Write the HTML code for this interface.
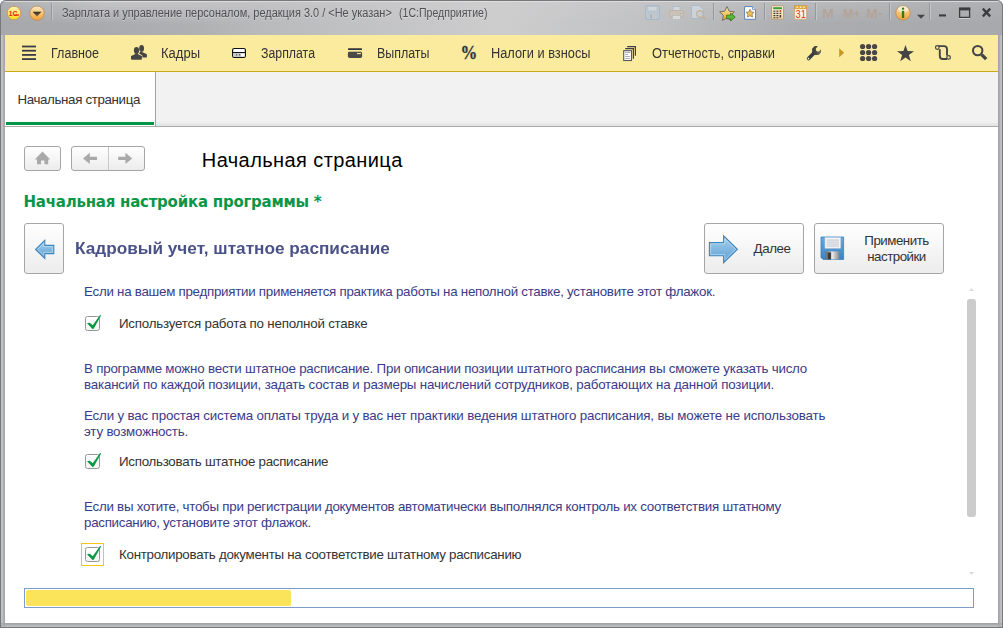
<!DOCTYPE html>
<html lang="ru"><head><meta charset="utf-8">
<title>Зарплата и управление персоналом</title>
<style>
*{box-sizing:border-box;margin:0;padding:0}
html,body{width:1003px;height:628px;overflow:hidden;background:#fff;font-family:"Liberation Sans",sans-serif;}
#win{position:absolute;left:0;top:0;width:1003px;height:628px;border-radius:6px 6px 0 0;background:#a6a7aa;overflow:hidden}
#tbar{left:0;top:0;width:1003px;height:35px;background:linear-gradient(90deg,#a7a8ab 0,#a9aaad 10%,#b0b1b3 20%,#b9babc 26%,#cdcdce 50%,#c0c1c2 65%,#abacaf 80%,#a8a9ac 100%)}
#tbar::before{content:"";position:absolute;left:0;top:0;width:1003px;height:35px;background:linear-gradient(90deg,#adaeb0 0,#b4b5b7 3%,#c3c3c5 10%,#c3c3c5 20%,#c2c2c4 26%,#cececf 50%,#c4c4c6 65%,#b9babc 80%,#b3b4b6 90%,#aeafb1 100%);-webkit-mask-image:linear-gradient(#000 0,#000 3px,transparent 25px);mask-image:linear-gradient(#000 0,#000 3px,transparent 25px)}
#tbar::after{content:"";position:absolute;left:0;top:1px;width:1003px;height:1px;background:rgba(226,226,228,.8)}
#frame{position:absolute;left:0;top:0;width:1003px;height:628px;border-radius:6px 6px 0 0;border:1px solid #77787a;pointer-events:none;z-index:9}
.abs{position:absolute}
#title{left:62px}
.tt{top:6px;font-size:12px;line-height:14px;color:#4f4f53;white-space:pre;text-shadow:0 1px 0 rgba(255,255,255,.3)}
.tsep{position:absolute;top:3px;width:2px;height:17px;background:linear-gradient(90deg,#96979a 50%,#c4c5c7 50%)}
.mem{position:absolute;top:6.5px;font-size:12px;line-height:14px;font-weight:bold;color:#b3a398}
#menubar{left:5px;top:35px;width:993px;height:37px;background:#fbeb9e;border-bottom:1px solid #c9a91b}
.mi{position:absolute;top:10px;font-size:14px;line-height:16px;color:#333;white-space:nowrap}
.ic{position:absolute;overflow:visible}
#tabbar{left:5px;top:72px;width:993px;height:55px;background:linear-gradient(#f2f2f2 0,#f2f2f2 49px,#e2e2e2 54px);border-bottom:1px solid #a9a9a9}
#tab{left:0;top:0;width:151px;height:54px;background:#fff;border-right:1px solid #a2a2a2;font-size:13.33px;line-height:15px;color:#333;padding:20px 0 0 13px;white-space:nowrap}
#content{left:5px;top:126px;width:993px;height:497px}
#cbg{left:5px;top:127px;width:993px;height:496px;background:#fff}
.btn{position:absolute;border:1px solid #a6a6a6;border-radius:3px;background:linear-gradient(#ffffff,#ececec)}
#ptitle{left:197px;top:22px;font-size:20px;line-height:24px;color:#000;white-space:nowrap}
#gh{left:19px;top:66px;font-family:'DejaVu Sans',sans-serif;font-size:15px;line-height:20px;font-weight:bold;color:#0a9647;white-space:nowrap}
#sh{left:70px;top:113px;font-size:16px;line-height:20px;font-weight:bold;color:#4a5187;white-space:nowrap}
.bt{position:absolute;font-size:13.33px;line-height:16px;color:#333;white-space:nowrap;text-align:center}
.p{position:absolute;left:79px;font-size:13.33px;line-height:16px;color:#3b3b88;white-space:nowrap}
.l{position:absolute;left:114px;font-size:13.33px;line-height:16px;color:#333;white-space:nowrap}
.cb{position:absolute;left:80px;width:15px;height:15px;border:1px solid #979797;border-radius:2.5px;background:linear-gradient(#fff,#f4f4f4)}
.cb svg{position:absolute;left:-1px;top:-4px;overflow:visible}
/*CAL*/
#title{margin-left:-0.20px;transform:scaleX(0.9130);transform-origin:0 50%}
#title2{margin-left:-0.20px;transform:scaleX(0.8791);transform-origin:0 50%}
#mi1{margin-left:0.20px;transform:scaleX(0.8962);transform-origin:0 50%}
#mi2{margin-left:0.20px;transform:scaleX(0.9300);transform-origin:0 50%}
#mi3{margin-left:-0.20px;transform:scaleX(0.8808);transform-origin:0 50%}
#mi4{margin-left:-0.50px;transform:scaleX(0.8884);transform-origin:0 50%}
#mi5{margin-left:-0.50px;transform:scaleX(0.9144);transform-origin:0 50%}
#mi6{margin-left:-0.10px;transform:scaleX(0.9190);transform-origin:0 50%}
#tabt{margin-left:-0.60px;letter-spacing:-0.353px}
#ptitle{margin-left:-0.20px;letter-spacing:0.412px}
#gh{margin-left:-0.50px;letter-spacing:-0.240px}
#sh{margin-left:-0.50px;transform:scaleX(1.0747);transform-origin:0 50%}
#bt1{margin-left:0.50px;letter-spacing:-0.400px}
#bt2{margin-left:-0.50px;letter-spacing:-0.500px}
#p1{margin-left:0.00px;letter-spacing:-0.260px}
#l1{margin-left:0.00px;letter-spacing:-0.216px}
#p2{margin-left:0.00px;letter-spacing:-0.202px}
#p3{margin-left:0.00px;letter-spacing:-0.177px}
#p4{margin-left:0.00px;letter-spacing:-0.163px}
#p5{margin-left:0.00px;letter-spacing:-0.187px}
#l2{margin-left:0.00px;letter-spacing:-0.273px}
#p6{margin-left:0.00px;letter-spacing:-0.255px}
#p7{margin-left:0.00px;letter-spacing:-0.276px}
#l3{margin-left:0.00px;letter-spacing:-0.271px}
#mem1{margin-left:-1.60px;transform:scaleX(1.1651);transform-origin:0 50%}
#mem2{margin-left:-1.20px;transform:scaleX(1.0021);transform-origin:0 50%}
#mem3{margin-left:-1.00px;transform:scaleX(1.1538);transform-origin:0 50%}
/*ENDCAL*/
</style></head><body>
<div id="win">
<div class="abs" id="tbar"></div>
<div class="abs tt" id="title">Зарплата и управление персоналом, редакция 3.0 / &lt;Не указан&gt;</div><div class="abs tt" id="title2" style="left:399px">(1С:Предприятие)</div>
<div class="tsep" style="left:51px"></div>
<div class="tsep" style="left:713px"></div>
<div class="tsep" style="left:764px"></div>
<div class="tsep" style="left:815px"></div>
<div class="tsep" style="left:889px"></div>
<div class="tsep" style="left:929px"></div>
<div id="mem1" class="mem" style="left:824px">M</div>
<div id="mem2" class="mem" style="left:844px">M+</div>
<div id="mem3" class="mem" style="left:867px">M-</div>

<!-- title bar icons -->
<svg class="ic" style="left:0;top:0" width="1003" height="35" viewBox="0 0 1003 35">
 <defs>
  <linearGradient id="g1c" x1="0" y1="0" x2="0" y2="1"><stop offset="0" stop-color="#fdf3b0"/><stop offset=".5" stop-color="#fbe870"/><stop offset="1" stop-color="#f7dc10"/></linearGradient>
  <linearGradient id="gor" x1="0" y1="0" x2="0" y2="1"><stop offset="0" stop-color="#fdeccf"/><stop offset=".45" stop-color="#f9c67c"/><stop offset="1" stop-color="#f3a032"/></linearGradient>
  <linearGradient id="gtri" x1="0" y1="0" x2="0" y2="1"><stop offset="0" stop-color="#2b2b2b"/><stop offset="1" stop-color="#8a6a3c"/></linearGradient>
  <linearGradient id="gst" x1="0" y1="0" x2="0" y2="1"><stop offset="0" stop-color="#fde9a8"/><stop offset="1" stop-color="#f0a830"/></linearGradient>
  <linearGradient id="gcalc" x1="0" y1="0" x2="0" y2="1"><stop offset="0" stop-color="#fff4dc"/><stop offset="1" stop-color="#f6d9a4"/></linearGradient>
 </defs>
 <!-- 1C logo -->
 <circle cx="14" cy="13" r="6.8" fill="url(#g1c)" stroke="#c99a62" stroke-width="1"/>
 <text x="8.8" y="15.7" font-family="Liberation Sans, sans-serif" font-weight="bold" font-size="7.7" fill="#e8201a" textLength="8.6" lengthAdjust="spacingAndGlyphs">1С</text>
 <rect x="14.4" y="14.4" width="4.5" height="1.3" fill="#e8201a"/>
 <!-- orange dropdown -->
 <circle cx="37" cy="13.2" r="7.2" fill="url(#gor)" stroke="#b98a5a" stroke-width="0.8"/>
 <path d="M32.6 11.8 H41.4 L37 16.6 Z" fill="url(#gtri)"/>
 <!-- disabled floppy -->
 <g opacity=".5">
  <rect x="645.5" y="5.5" width="14" height="14" rx="1.5" fill="#b4cbe0" stroke="#8fb0cf"/>
  <rect x="648" y="6.5" width="9" height="4.5" fill="#dfe9f1" stroke="#9ab7d0" stroke-width=".6"/>
  <rect x="649" y="13.5" width="7" height="5.5" fill="#c8cdd2"/>
  <rect x="650" y="14.5" width="2" height="4" fill="#8fa8c0"/>
 </g>
 <!-- disabled printer -->
 <g opacity=".5">
  <rect x="673" y="6.5" width="7" height="5" fill="#e4edf5" stroke="#9ab7d0" stroke-width=".8"/>
  <rect x="669.5" y="10.5" width="14" height="6.5" rx="1.5" fill="#d9c3ae" stroke="#bfa58e"/>
  <rect x="672.5" y="15.5" width="8" height="4" fill="#f4f4f4" stroke="#b8b8b8" stroke-width=".8"/>
  <rect x="680" y="13" width="1.5" height="1.2" fill="#6fc06f"/>
 </g>
 <!-- disabled preview -->
 <g opacity=".5">
  <path d="M691.5 5.5 H699.5 L703.5 9.5 V18.5 H691.5 Z" fill="#dbe7f2" stroke="#9ab7d0"/>
  <circle cx="700" cy="14" r="3.3" fill="#cfdff0" stroke="#c9a888" stroke-width="1.4"/>
  <path d="M702.5 16.5 L705.5 19.5" stroke="#c9a888" stroke-width="2"/>
 </g>
 <!-- star with green arrow -->
 <path d="M727 6.6 L729.2 11.2 L734.3 11.9 L730.6 15.4 L731.5 20.4 L727 18 L722.5 20.4 L723.4 15.4 L719.7 11.9 L724.8 11.2 Z" fill="url(#gst)" stroke="#6b6558" stroke-width=".9"/>
 <path d="M726.5 15.2 H730.6 V13 L735.2 17 L730.6 21 V18.8 H726.5 Z" fill="#58b83c" stroke="#2c7a1c" stroke-width=".8"/>
 <!-- doc with star -->
 <path d="M744.6 6.6 H752.5 L755.5 9.6 V19.3 H744.6 Z" fill="#fff" stroke="#5c84b4" stroke-width="1"/>
 <path d="M752.5 6.6 V9.6 H755.5" fill="#dbe6f2" stroke="#5c84b4" stroke-width=".7"/>
 <path d="M750 9.3 L751.2 11.9 L754 12.3 L752 14.2 L752.5 17 L750 15.7 L747.5 17 L748 14.2 L746 12.3 L748.8 11.9 Z" fill="#f4c252" stroke="#7a6a48" stroke-width=".7"/>
 <!-- calculator -->
 <rect x="771.6" y="5.8" width="12" height="13.4" rx="1" fill="url(#gcalc)" stroke="#b59a78" stroke-width="1"/>
 <rect x="773.2" y="7.2" width="8.8" height="2" fill="#3c9c3c"/>
 <g fill="#3a3a3a"><rect x="773.4" y="10.6" width="2" height="1.2"/><rect x="776.4" y="10.6" width="2" height="1.2"/>
 <rect x="773.4" y="12.8" width="2" height="1.2"/><rect x="776.4" y="12.8" width="2" height="1.2"/><rect x="779.6" y="12.8" width="1.6" height="1.2"/>
 <rect x="773.4" y="15" width="2" height="1.2"/><rect x="776.4" y="15" width="2" height="1.2"/><rect x="779.6" y="15" width="1.6" height="2.6"/>
 <rect x="773.4" y="17.2" width="2" height="1"/><rect x="776.4" y="17.2" width="2" height="1"/></g>
 <rect x="779.6" y="10.2" width="1.6" height="1.8" fill="#e03020"/>
 <!-- calendar -->
 <rect x="794.6" y="5.8" width="12" height="13.4" fill="#fff6e6" stroke="#c8ae88" stroke-width="1"/>
 <rect x="794.6" y="5.8" width="12" height="3" fill="#e9b243" stroke="#c59432" stroke-width=".6"/>
 <g fill="#fff"><rect x="796.6" y="6.6" width="1.2" height="1.2"/><rect x="800" y="6.6" width="1.2" height="1.2"/><rect x="803.4" y="6.6" width="1.2" height="1.2"/></g>
 <text x="795.6" y="18.2" font-family="Liberation Sans, sans-serif" font-weight="normal" font-size="11" fill="#e0301c" textLength="10.4" lengthAdjust="spacingAndGlyphs">31</text>
 <!-- info -->
 <circle cx="903" cy="12.9" r="7.2" fill="url(#gor)" stroke="#b98a5a" stroke-width=".8"/>
 <ellipse cx="903" cy="9.2" rx="5" ry="3.2" fill="#fff" opacity=".45"/>
 <rect x="901.9" y="7.6" width="2.3" height="2.2" rx="1" fill="#2f7d12"/>
 <rect x="901.9" y="10.8" width="2.3" height="7.2" fill="#2f7d12"/>
 <path d="M917 14.8 H925 L921 18.8 Z" fill="#454545"/>
 <!-- window controls -->
 <rect x="939" y="15.6" width="7" height="1.2" fill="#d8d8da"/>
 <rect x="939" y="14.4" width="7" height="2.2" fill="#3c3c3e"/>
 <path d="M959.6 8.2 H969.6 V17.4 H959.6 Z" fill="none" stroke="#3c3c3e" stroke-width="1.3"/>
 <rect x="959" y="7.8" width="11.2" height="2.6" fill="#3c3c3e"/>
 <rect x="959" y="18" width="11.2" height="1" fill="#d0d0d2"/>
 <path d="M982.8 8.6 L990.2 16.4 M990.2 8.6 L982.8 16.4" stroke="#3c3c3e" stroke-width="2.3" fill="none"/>
</svg>
<div class="abs" id="menubar">
  <div id="mi1" class="mi" style="left:46px">Главное</div>
  <div id="mi2" class="mi" style="left:156px">Кадры</div>
  <div id="mi3" class="mi" style="left:256px">Зарплата</div>
  <div id="mi4" class="mi" style="left:372px">Выплаты</div>
  <div id="mi5" class="mi" style="left:486px">Налоги и взносы</div>
  <div id="mi6" class="mi" style="left:647px">Отчетность, справки</div>
</div>

<!-- menu bar icons (page coords) -->
<svg class="ic" style="left:0;top:35px" width="1003" height="37" viewBox="0 35 1003 37">
 <g fill="#3a3b45"><rect x="22" y="45.6" width="14" height="1.8"/><rect x="22" y="49.8" width="14" height="1.8"/><rect x="22" y="54" width="14" height="1.8"/><rect x="22" y="58.2" width="14" height="1.8"/></g>
 <!-- people -->
 <g fill="#454545">
  <ellipse cx="141.6" cy="48.4" rx="2.4" ry="3.4"/>
  <path d="M140.4 51.4 L142.6 52.3 L146.9 54.2 V57 Q146.9 57.6 146.2 57.6 H142.4 V55.4 L139 53.4 Z"/>
  <ellipse cx="136.5" cy="50.5" rx="2.6" ry="3.4"/>
  <path d="M135 53.4 H138 L138.4 54.6 L141.9 56 V59 Q141.9 59.8 141 59.8 H132 Q131 59.8 131 59 V56 L134.6 54.6 Z"/>
 </g>
 <!-- card -->
 <rect x="232.6" y="48.5" width="12.8" height="8.8" rx="1.6" fill="#fff" stroke="#111" stroke-width="1.2"/>
 <rect x="233.2" y="52.9" width="11.6" height="3.9" fill="#c9c9c9"/>
 <rect x="232.6" y="52" width="12.8" height="1" fill="#111"/>
 <rect x="241" y="53.6" width="3.4" height="2.8" fill="#fff"/>
 <rect x="236" y="54.2" width="1.2" height="1.2" fill="#444"/><rect x="239" y="54.2" width="1.2" height="1.2" fill="#444"/>
 <!-- wallet -->
 <rect x="348" y="48.2" width="14" height="1.9" rx=".6" fill="#33343d"/>
 <rect x="348.4" y="52.2" width="13.2" height="5.2" rx=".8" fill="#4a4a4a" stroke="#33343d" stroke-width=".9"/>
 <rect x="357" y="53" width="4" height="1.1" fill="#f7e79a"/>
 <!-- percent -->
 <text x="460.6" y="58.9" font-family="Liberation Serif, serif" font-weight="bold" font-size="18" fill="#34353f" stroke="#34353f" stroke-width=".3" textLength="16.8" lengthAdjust="spacingAndGlyphs">%</text>
 <!-- docs -->
 <path d="M627.2 46.6 H635.4 V55.8" fill="none" stroke="#3e3f48" stroke-width="1.2"/>
 <path d="M625.2 48.7 H633.4 V58.8" fill="none" stroke="#3e3f48" stroke-width="1.2"/>
 <rect x="623.7" y="50.7" width="7.8" height="9.8" fill="#fff" stroke="#55565e" stroke-width="1.1"/>
 <g fill="#9a9a9a"><rect x="625.2" y="52.2" width="4.8" height=".8"/><rect x="625.2" y="54.1" width="2.8" height=".8"/><rect x="625.2" y="56.1" width="4.8" height=".8"/><rect x="625.2" y="58.1" width="4.8" height=".8"/></g>
 <!-- wrench -->
 <linearGradient id="gwr" gradientUnits="userSpaceOnUse" x1="812" y1="0" x2="821" y2="0"><stop offset="0" stop-color="#3a3b43"/><stop offset=".45" stop-color="#4a4a47"/><stop offset="1" stop-color="#7a775c"/></linearGradient>
 <path d="M808.6 58.5 L814 53.1" stroke="#3a3b43" stroke-width="3.6" stroke-linecap="round" fill="none"/>
 <path d="M812.1 48.7 L814.6 46.1 H818 L815.9 48.5 V50.3 L817.1 51.4 H818.8 L821 49.2 V52.6 L818.6 55 H814.8 L812.1 53.2 Z" fill="url(#gwr)"/>
 <circle cx="808.5" cy="58.6" r=".85" fill="#fdf4c8"/>
 <path d="M839.2 48.2 L844.2 52.7 L839.2 57.2 Z" fill="#c49a22"/>
 <g fill="#474747">
  <circle cx="862.6" cy="46.5" r="2.6"/><circle cx="868.6" cy="46.5" r="2.6"/><circle cx="874.6" cy="46.5" r="2.6"/>
  <circle cx="862.6" cy="52.5" r="2.6"/><circle cx="868.6" cy="52.5" r="2.6"/><circle cx="874.6" cy="52.5" r="2.6"/>
  <circle cx="862.6" cy="58.5" r="2.6"/><circle cx="868.6" cy="58.5" r="2.6"/><circle cx="874.6" cy="58.5" r="2.6"/>
 </g>
 <!-- star -->
 <path d="M905.5 45 L907.6 51.1 L914 51.2 L908.9 55.1 L910.8 61.2 L905.5 57.5 L900.2 61.2 L902.1 55.1 L897 51.2 L903.4 51.1 Z" fill="#444"/>
 <!-- scroll -->
 <g fill="none" stroke="#444" stroke-width="1.9">
  <path d="M938.4 46.1 H944 Q947 46.1 947 49 V55.6"/>
  <path d="M939.8 49.2 V56 Q939.8 59 942.8 59 H947"/>
 </g>
 <circle cx="937.3" cy="47.5" r="1.8" fill="#fbeb9e" stroke="#444" stroke-width="1.2"/>
 <circle cx="948.6" cy="57.4" r="1.8" fill="#fbeb9e" stroke="#444" stroke-width="1.2"/>
 <!-- search -->
 <circle cx="977.7" cy="50.6" r="4.7" fill="none" stroke="#444" stroke-width="2"/>
 <path d="M981.6 54.6 L986.2 59.2" stroke="#444" stroke-width="3.3" fill="none"/>
</svg>
<div class="abs" id="tabbar"><div class="abs" id="tab"><span id="tabt" style="display:inline-block">Начальная страница</span></div><div class="abs" style="left:1px;top:50px;width:148px;height:3px;background:#009646"></div></div>
<div class="abs" id="cbg"></div>
<div class="abs" id="content">
  <div class="btn" style="left:19px;top:20px;width:37px;height:25px"></div>
  <div class="btn" style="left:66px;top:20px;width:74px;height:25px"><div class="abs" style="left:36px;top:0;width:1px;height:23px;background:#c8c8c8"></div></div>
  
  <!-- content icons (page coords) -->
  <svg class="ic" style="left:-5px;top:-126px;z-index:5;pointer-events:none" width="1003" height="628" viewBox="0 0 1003 628">
   <defs>
    <linearGradient id="gar" x1="0" y1="0" x2="0" y2="1"><stop offset="0" stop-color="#a9d0ec"/><stop offset="1" stop-color="#5a9fd4"/></linearGradient>
    <linearGradient id="gfl" x1="0" y1="0" x2="0" y2="1"><stop offset="0" stop-color="#6aa9dc"/><stop offset="1" stop-color="#3a83c2"/></linearGradient>
    <linearGradient id="gsh" x1="0" y1="0" x2="1" y2="0"><stop offset="0" stop-color="#6a6a6a"/><stop offset=".5" stop-color="#e8e8e8"/><stop offset="1" stop-color="#8a8a8a"/></linearGradient>
   </defs>
   <!-- home -->
   <g fill="#a9a9a9">
    <path d="M42.5 151.6 L50.2 159.4 H34.8 Z"/>
    <path d="M37 158 H48.2 V164.3 H44.4 V160.4 H41 V164.3 H37 Z"/>
   </g>
   <!-- back / forward -->
   <path d="M83 158.4 L89.8 152.8 V156.8 H97 V160 H89.8 V164 Z" fill="#a9a9a9"/>
   <path d="M132.2 158.4 L125.4 152.8 V156.8 H118.2 V160 H125.4 V164 Z" fill="#a9a9a9"/>
   <!-- big back arrow -->
   <path d="M35.6 249.4 L44.8 240.4 V245.4 H53.8 V253.6 H44.8 V258.4 Z" fill="url(#gar)" stroke="#3f86bd" stroke-width="1.1" stroke-linejoin="miter"/>
   <path d="M37.6 249.4 L43.6 243.6 V246.6 H52.6 V252.4 H43.6 V255.2 Z" fill="none" stroke="#cfe6f6" stroke-width=".7" opacity=".8"/>
   <!-- next arrow -->
   <path d="M709.4 242.6 H723.6 V235.8 L737.4 249.3 L723.6 262.8 V255.8 H709.4 Z" fill="url(#gar)" stroke="#3f86bd" stroke-width="1.1"/>
   <path d="M710.6 243.8 H724.8 V238.8 L735.6 249.3 L724.8 259.8 V254.6 H710.6 Z" fill="none" stroke="#cfe6f6" stroke-width=".7" opacity=".8"/>
   <!-- floppy -->
   <path d="M821 237 H843.6 V259.4 H823 L821 257.4 Z" fill="url(#gfl)" stroke="#3a7fba" stroke-width=".8"/>
   <rect x="825" y="237.6" width="15.6" height="10.6" fill="#f4f6f8" stroke="#c5d3e0" stroke-width=".6"/>
   <g fill="#b9bec4"><rect x="826.6" y="239.6" width="12.4" height=".9"/><rect x="826.6" y="241.6" width="12.4" height=".9"/><rect x="826.6" y="243.6" width="12.4" height=".9"/><rect x="826.6" y="245.6" width="12.4" height=".9"/></g>
   <rect x="825.6" y="251.4" width="13.6" height="8" fill="url(#gsh)"/>
   <rect x="827.6" y="252.4" width="3.4" height="7" fill="#3c3c3c"/>
   <!-- scroll arrows -->
   <path d="M969 291 L971.5 288 L974 291 Z" fill="#dcdcdc"/>
   <path d="M969 572 L971.5 575 L974 572 Z" fill="#dcdcdc"/>
  </svg>
  <div class="abs" id="ptitle">Начальная страница</div>
  <div class="abs" id="gh">Начальная настройка программы *</div>
  <div class="btn" style="left:19px;top:97px;width:40px;height:51px"></div>
  <div class="abs" id="sh">Кадровый учет, штатное расписание</div>
  <div class="btn" style="left:699px;top:97px;width:100px;height:51px"><div id="bt1" class="bt" style="left:48px;top:17px">Далее</div></div>
  <div class="btn" style="left:809px;top:97px;width:130px;height:51px"><div id="bt2" class="bt" style="left:36px;top:9px;width:92px">Применить<br>настройки</div></div>

  <div id="p1" class="p" style="top:158px">Если на вашем предприятии применяется практика работы на неполной ставке, установите этот флажок.</div>
  <div class="cb" style="top:190px"><svg width="18" height="18" viewBox="0 -3 18 18"><path d="M2 7.3 L4.4 6.7 Q6.2 7.2 7.7 9.3 L14.7 -0.5 Q15.6 -1.3 16.1 -0.4 L9 12.3 Q8 13.6 7 12.5 Z" fill="#0b9843"/></svg></div>
  <div id="l1" class="l" style="top:189.6px">Используется работа по неполной ставке</div>
  <div id="p2" class="p" style="top:235px">В программе можно вести штатное расписание. При описании позиции штатного расписания вы сможете указать число</div>
  <div id="p3" class="p" style="top:251px">вакансий по каждой позиции, задать состав и размеры начислений сотрудников, работающих на данной позиции.</div>
  <div id="p4" class="p" style="top:282px">Если у вас простая система оплаты труда и у вас нет практики ведения штатного расписания, вы можете не использовать</div>
  <div id="p5" class="p" style="top:298px">эту возможность.</div>
  <div class="cb" style="top:328px"><svg width="18" height="18" viewBox="0 -3 18 18"><path d="M2 7.3 L4.4 6.7 Q6.2 7.2 7.7 9.3 L14.7 -0.5 Q15.6 -1.3 16.1 -0.4 L9 12.3 Q8 13.6 7 12.5 Z" fill="#0b9843"/></svg></div>
  <div id="l2" class="l" style="top:327.6px">Использовать штатное расписание</div>
  <div id="p6" class="p" style="top:373px">Если вы хотите, чтобы при регистрации документов автоматически выполнялся контроль их соответствия штатному</div>
  <div id="p7" class="p" style="top:389px">расписанию, установите этот флажок.</div>
  <div class="abs" style="left:76px;top:417px;width:23px;height:23px;border:1px solid #f5c518"></div>
  <div class="cb" style="top:421px"><svg width="18" height="18" viewBox="0 -3 18 18"><path d="M2 7.3 L4.4 6.7 Q6.2 7.2 7.7 9.3 L14.7 -0.5 Q15.6 -1.3 16.1 -0.4 L9 12.3 Q8 13.6 7 12.5 Z" fill="#0b9843"/></svg></div>
  <div id="l3" class="l" style="top:420.6px">Контролировать документы на соответствие штатному расписанию</div>

  <div class="abs" style="left:962px;top:173px;width:9px;height:218px;border-radius:3px;background:#ccc"></div>
  <div class="abs" style="left:19px;top:462px;width:950px;height:20px;border:1px solid #7a9cc6;background:#fff"><div class="abs" style="left:1px;top:1px;width:265px;height:16px;border-radius:2px;background:#fbe45a"></div></div>
</div>
<div class="abs" style="left:0;top:35px;width:5px;height:593px;background:linear-gradient(90deg,#868688 0,#868688 1px,#c4c4c6 1px,#c0c0c2 2.4px,#b2b3b5 3px,#a2a3a6 5px)"></div>
<div class="abs" style="left:998px;top:35px;width:5px;height:593px;background:linear-gradient(270deg,#828284 0,#828284 1px,#c4c4c6 1px,#c0c0c2 2.2px,#b0b1b3 3px,#a0a1a4 5px)"></div>
<div class="abs" style="left:0;top:623px;width:1003px;height:5px;background:linear-gradient(0deg,#7e7e80 0,#7e7e80 1px,#c2c2c4 1px,#bcbcbe 2.2px,#aeafb1 3px,#a0a1a4 5px)"></div>
<div class="abs" style="left:0;top:623px;width:5px;height:5px;background:linear-gradient(45deg,#868688 0,#b8b8ba 40%,#a8a8aa 70%)"></div>
<div class="abs" style="left:998px;top:623px;width:5px;height:5px;background:linear-gradient(315deg,#828284 0,#b8b8ba 40%,#a8a8aa 70%)"></div>
<div id="frame"></div>
</div>
</body></html>
